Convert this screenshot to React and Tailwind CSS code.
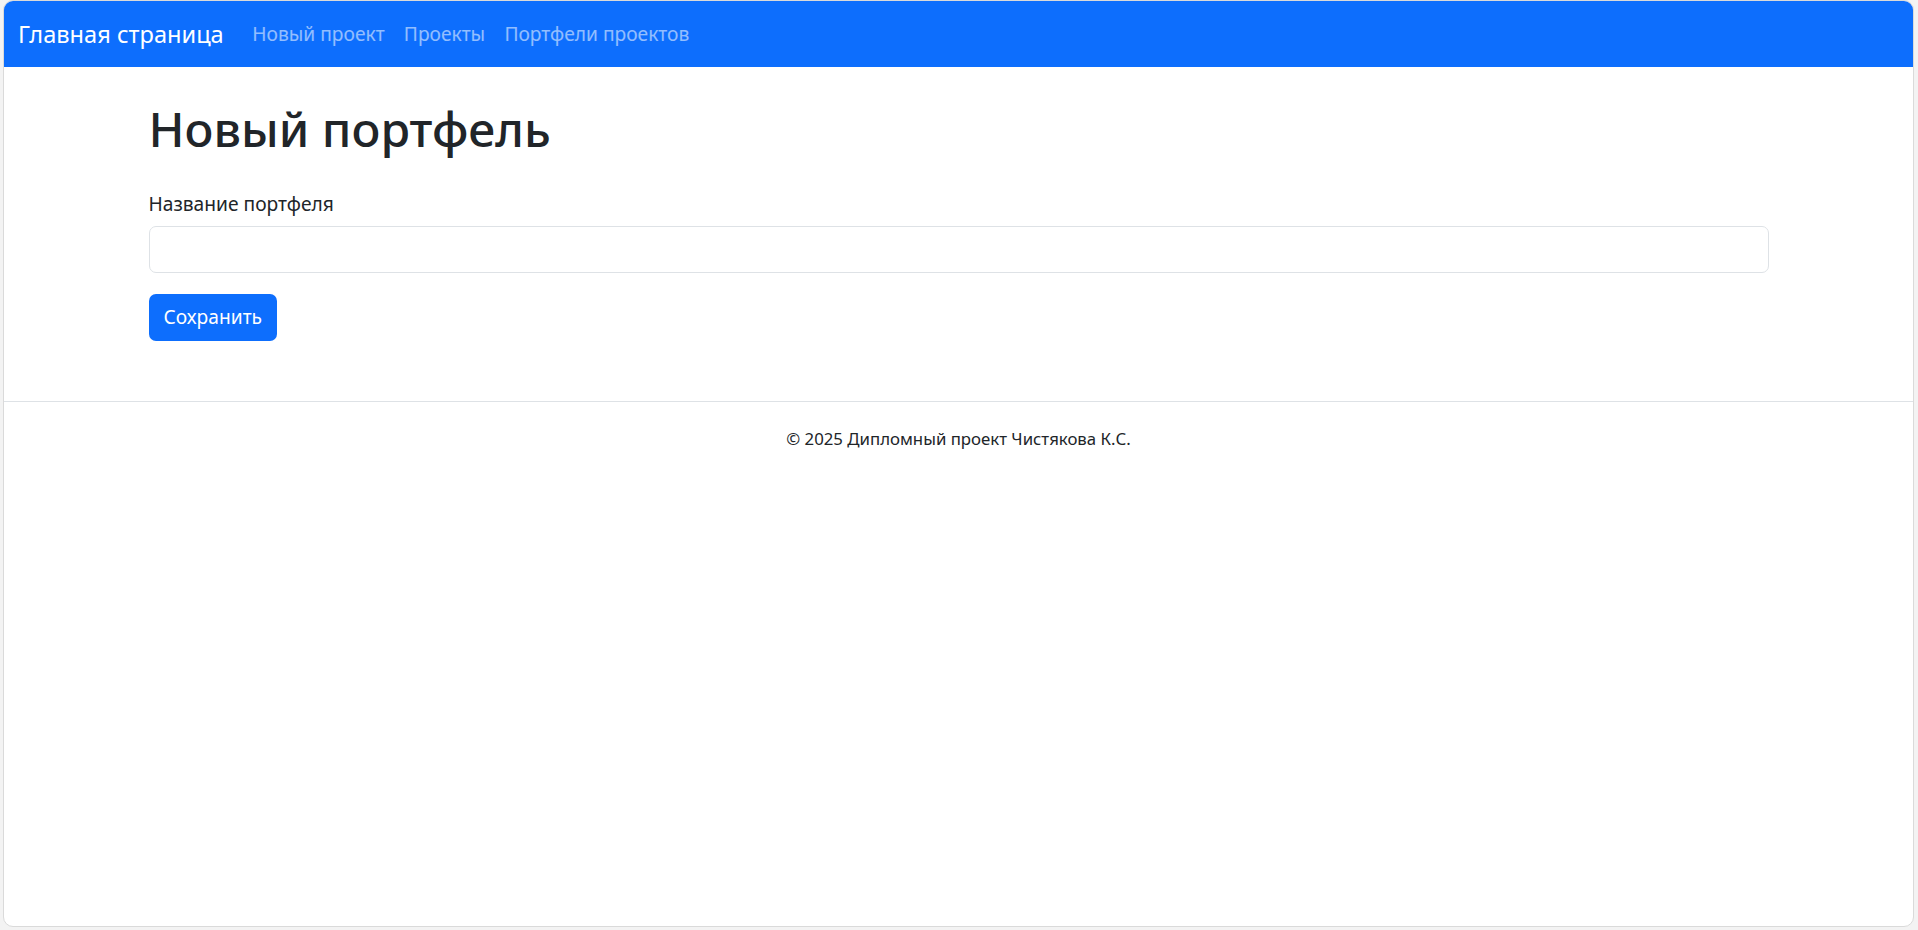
const NAV_LINKS = ["Новый проект", "Проекты", "Портфели проектов"];

export default function App() {
  return (
    <div
      className="h-[930px] w-full bg-[#f3f3f3] pl-[3px] pr-[4px] pb-[3px]"
      style={{ fontFamily: '"Noto Sans", "Open Sans", sans-serif' }}
    >
      <div className="h-full bg-white rounded-[10px] border border-[#dadada] overflow-hidden flex flex-col text-[#212529]">
        {/* Navbar */}
        <nav className="h-[66px] shrink-0 bg-[#0d6efd] flex items-center px-[14px]">
          <a className="text-white text-[23.6px] leading-[36px] mr-[19px] whitespace-nowrap">
            Главная страница
          </a>
          <div className="flex items-center">
            {NAV_LINKS.map((l) => (
              <a
                key={l}
                className="px-[9.6px] text-[19.2px] leading-[28.8px] text-white/55 whitespace-nowrap"
              >
                {l}
              </a>
            ))}
          </div>
        </nav>

        {/* Content */}
        <main className="w-[1620px] mx-auto pt-[33px] pb-[60px]">
          <h1 className="text-[48px] leading-[57.6px] font-medium mb-[32px]">
            Новый портфель
          </h1>
          <form onSubmit={(e) => e.preventDefault()}>
            <div className="mb-[21px]">
              <label className="block text-[19.2px] leading-[28.8px] mb-[8px]">
                Название портфеля
              </label>
              <input
                type="text"
                className="block w-full h-[47px] rounded-[7px] border border-[#dee2e6] px-[14px] text-[19.2px] outline-none"
              />
            </div>
            <button
              type="submit"
              className="h-[47px] px-[15px] rounded-[7px] bg-[#0d6efd] text-white text-[19.2px] leading-[28.8px]"
            >
              Сохранить
            </button>
          </form>
        </main>

        {/* Footer */}
        <footer className="border-t border-[#dee2e6] pt-[24px] text-center text-[16.8px] leading-[25.2px]">
          © 2025 Дипломный проект Чистякова К.С.
        </footer>
      </div>
    </div>
  );
}
